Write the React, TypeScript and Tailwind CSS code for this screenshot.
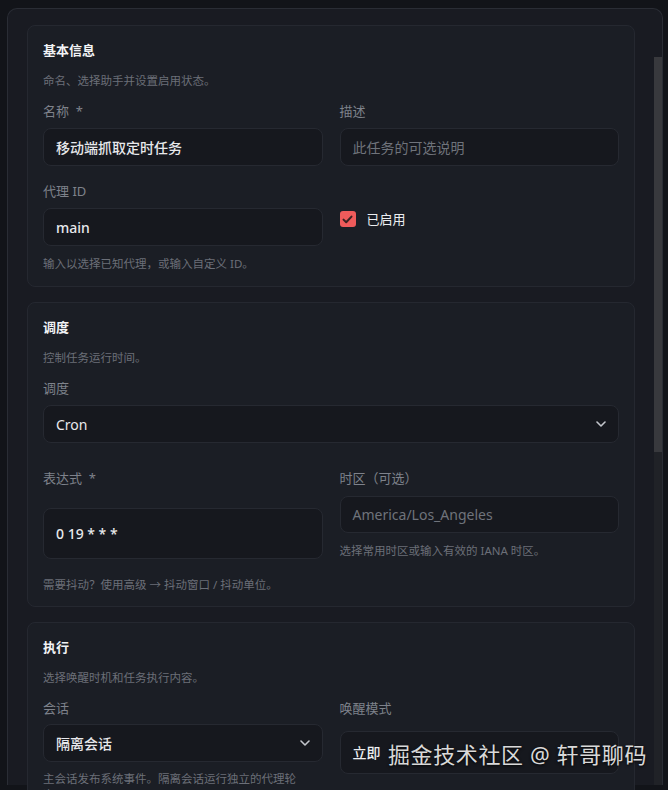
import React from "react";

const font = { fontFamily: '"Noto Sans", "Noto Sans CJK SC", sans-serif' };

function Chevron() {
  return (
    <svg width="10" height="6" viewBox="0 0 10 6" fill="none" className="text-[#c3c6cc]">
      <path d="M1 1l4 4 4-4" stroke="currentColor" strokeWidth="1.6" strokeLinecap="round" strokeLinejoin="round" />
    </svg>
  );
}

function Label({ children }: { children: React.ReactNode }) {
  return <div className="text-[13px] leading-[18px] text-[#7e828b]">{children}</div>;
}

function Helper({ children, className = "" }: { children: React.ReactNode; className?: string }) {
  return <div className={"text-[11.5px] leading-[16px] text-[#6b6f78] " + className}>{children}</div>;
}

function Box({ children, className = "" }: { children: React.ReactNode; className?: string }) {
  return (
    <div
      className={
        "flex items-center rounded-[8px] border border-[#262931] bg-[#16181e] px-[12px] text-[14px] " +
        className
      }
    >
      {children}
    </div>
  );
}

function CardHead({ title, desc }: { title: string; desc: string }) {
  return (
    <>
      <div className="text-[13px] font-bold leading-[20px] text-[#f2f3f5]">{title}</div>
      <div className="mt-[13px] text-[11.5px] leading-[16px] text-[#6b6f78]">{desc}</div>
    </>
  );
}

export default function App() {
  return (
    <div className="relative h-[790px] w-[668px] overflow-hidden bg-[#121419]" style={font}>
      <div className="ml-[7px] mr-[5px] mt-[8px] flex h-[777px] rounded-t-[10px] border border-b-0 border-[#2a2d35] bg-[#191b22]">
        <div className="flex flex-1 flex-col gap-[15px] px-[19px] pt-[16px]">
          {/* Card 1 */}
          <div className="rounded-[8px] border border-[#252830] bg-[#1b1e25] px-[15px] pb-[14px] pt-[14px]">
            <CardHead title="基本信息" desc="命名、选择助手并设置启用状态。" />
            <div className="mt-[13px] grid grid-cols-2 gap-x-[17px]">
              <div>
                <Label>名称&nbsp; *</Label>
                <Box className="mt-[8px] h-[38px] font-medium text-[#e8e9ec]">移动端抓取定时任务</Box>
              </div>
              <div>
                <Label>描述</Label>
                <Box className="mt-[8px] h-[38px] text-[#6f737b]">此任务的可选说明</Box>
              </div>
              <div className="mt-[16px]">
                <Label>代理 ID</Label>
                <Box className="mt-[8px] h-[38px] font-medium text-[#e8e9ec]">main</Box>
                <Helper className="mt-[10px]">输入以选择已知代理，或输入自定义 ID。</Helper>
              </div>
              <div className="mt-[45px] flex items-start gap-[11px]">
                <div className="flex h-[16px] w-[16px] items-center justify-center rounded-[3px] bg-[#ef5b5b]">
                  <svg width="11" height="9" viewBox="0 0 11 9" fill="none">
                    <path d="M1.5 4.6l2.7 2.7L9.5 1.6" stroke="#3b2222" strokeWidth="2" strokeLinecap="round" strokeLinejoin="round" />
                  </svg>
                </div>
                <span className="text-[13px] leading-[16px] text-[#eceef1]">已启用</span>
              </div>
            </div>
          </div>

          {/* Card 2 */}
          <div className="rounded-[8px] border border-[#252830] bg-[#1b1e25] px-[15px] pb-[13px] pt-[14px]">
            <CardHead title="调度" desc="控制任务运行时间。" />
            <div className="mt-[13px]">
              <Label>调度</Label>
              <Box className="mt-[8px] h-[38px] justify-between text-[#e8e9ec]">
                <span>Cron</span>
                <Chevron />
              </Box>
            </div>
            <div className="mt-[26px] grid grid-cols-2 gap-x-[17px]">
              <div className="flex flex-col justify-between">
                <Label>表达式&nbsp; *</Label>
                <Box className="h-[51px] font-medium text-[#e8e9ec]">0 19 * * *</Box>
              </div>
              <div>
                <Label>时区（可选）</Label>
                <Box className="mt-[9px] h-[37px] text-[#6f737b]">America/Los_Angeles</Box>
                <Helper className="mt-[10px]">选择常用时区或输入有效的 IANA 时区。</Helper>
              </div>
            </div>
            <Helper className="mt-[18px]">需要抖动？使用高级 → 抖动窗口 / 抖动单位。</Helper>
          </div>

          {/* Card 3 */}
          <div className="rounded-[8px] border border-[#252830] bg-[#1b1e25] px-[15px] pb-[14px] pt-[14px]">
            <CardHead title="执行" desc="选择唤醒时机和任务执行内容。" />
            <div className="mt-[13px] grid grid-cols-2 gap-x-[17px]">
              <div>
                <Label>会话</Label>
                <Box className="mt-[7px] h-[38px] justify-between font-medium text-[#e8e9ec]">
                  <span>隔离会话</span>
                  <Chevron />
                </Box>
                <Helper className="mt-[9px] max-w-[265px]">主会话发布系统事件。隔离会话运行独立的代理轮次。</Helper>
              </div>
              <div>
                <Label>唤醒模式</Label>
                <Box className="mt-[14px] h-[43px] font-medium text-[#eceef1]">立即</Box>
              </div>
            </div>
          </div>
        </div>
        {/* scrollbar */}
        <div className="mt-[48px] flex w-[8px] flex-col">
          <div className="h-[395px] bg-[#38393d]" />
          <div className="flex-1 bg-[#202227]" />
        </div>
      </div>

      {/* watermark overlay */}
      <div className="absolute left-[388px] top-[740px] whitespace-nowrap text-[22px] leading-[28px] tracking-[0.6px] text-[#d9d9d9] [text-shadow:0_1px_3px_rgba(0,0,0,0.9)]">
        掘金技术社区 @ 轩哥聊码
      </div>
    </div>
  );
}
